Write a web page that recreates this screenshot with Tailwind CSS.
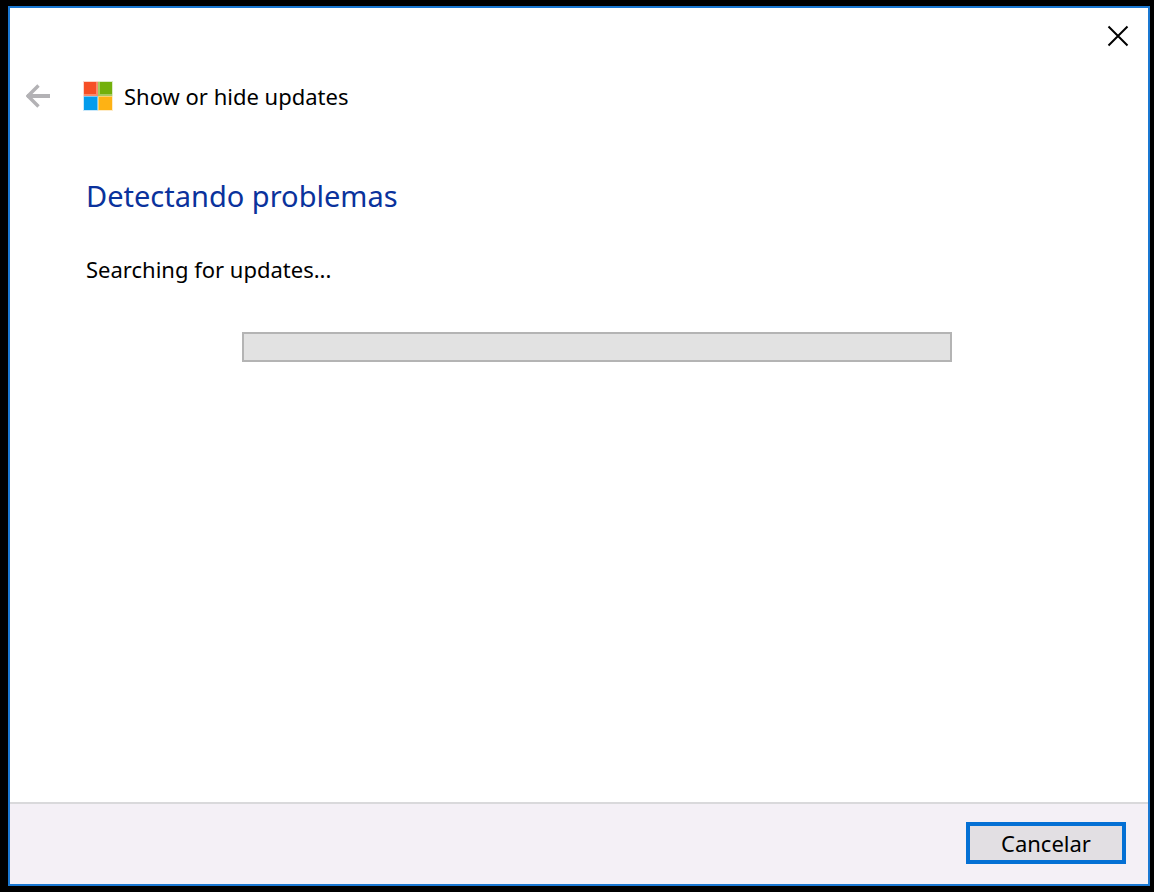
<!DOCTYPE html>
<html lang="es">
<head>
    <meta charset="UTF-8">
    <meta name="viewport" content="width=device-width, initial-scale=1.0">
    <title>Show or hide updates</title>
    <script src="https://cdn.jsdelivr.net/npm/@tailwindcss/browser@4"></script>
</head>
<body class="bg-black min-h-screen flex pl-2 pr-1 py-1.5 font-['Segoe_UI','Noto_Sans',sans-serif] text-[22px] leading-8 text-black">
    <div class="flex-1 flex flex-col bg-white border-2 border-[#1a78d2]">
        <div class="flex justify-end pt-2.5 pr-3">
            <button type="button" aria-label="Cerrar" class="p-1.5">
                <svg class="size-6" viewBox="0 0 24 24" fill="none" stroke="#000" stroke-width="2">
                    <path d="M2.5 2.5l19 19M21.5 2.5l-19 19"/>
                </svg>
            </button>
        </div>

        <header class="flex items-center pt-[26px] pl-4">
            <button type="button" aria-label="Atrás" disabled class="mr-8">
                <svg class="w-6 h-6" viewBox="0 0 24 24" fill="none" stroke="#b3b2b5">
                    <path d="M1 12h23" stroke-width="4"/>
                    <path d="M12.5 1.5L2 12l10.5 10.5" stroke-width="3.4"/>
                </svg>
            </button>
            <svg class="w-8 h-8 mr-2.5" viewBox="0 0 32 32" aria-hidden="true">
                <path fill="#fbd5cb" d="M1 1h15v15H1z"/>
                <path fill="#dcecc8" d="M16 1h15v15H16z"/>
                <path fill="#c8e8fb" d="M1 16h15v15H1z"/>
                <path fill="#feecc8" d="M16 16h15v15H16z"/>
                <path fill="#fa8a6c" d="M2 2h14v14H2z"/>
                <path fill="#a5cb60" d="M16 2h14v14H16z"/>
                <path fill="#7cc8f2" d="M2 16h14v14H2z"/>
                <path fill="#fdd070" d="M16 16h14v14H16z"/>
                <path fill="#f64f26" d="M2 2h12v12H2z"/>
                <path fill="#73b00c" d="M18 2h12v12H18z"/>
                <path fill="#049cec" d="M2 17h13v13H2z"/>
                <path fill="#feb214" d="M17 17h13v13H17z"/>
            </svg>
            <h1>Show or hide updates</h1>
        </header>

        <main class="flex-1 pt-16 pl-[76px] pr-[196px]">
            <h2 class="text-[29px] leading-10 text-[#0a329c]">Detectando problemas</h2>
            <label for="searchProgress" class="block mt-[37px]">Searching for updates...</label>
            <div class="pl-39 mt-[47px]">
                <progress id="searchProgress" value="0" max="100" class="block w-full h-[30px] appearance-none border-2 border-[#b4b4b4] bg-[#e2e2e2] [&::-webkit-progress-bar]:bg-[#e2e2e2]"></progress>
            </div>
        </main>

        <footer class="flex justify-end bg-[#f4f0f6] border-t-2 border-[#d9d9db] pt-[18px] pb-5 pr-[22px]">
            <button type="button" class="w-40 h-[42px] bg-[#e2dfe3] border-4 border-[#0470d4]">Cancelar</button>
        </footer>
    </div>
</body>
</html>
